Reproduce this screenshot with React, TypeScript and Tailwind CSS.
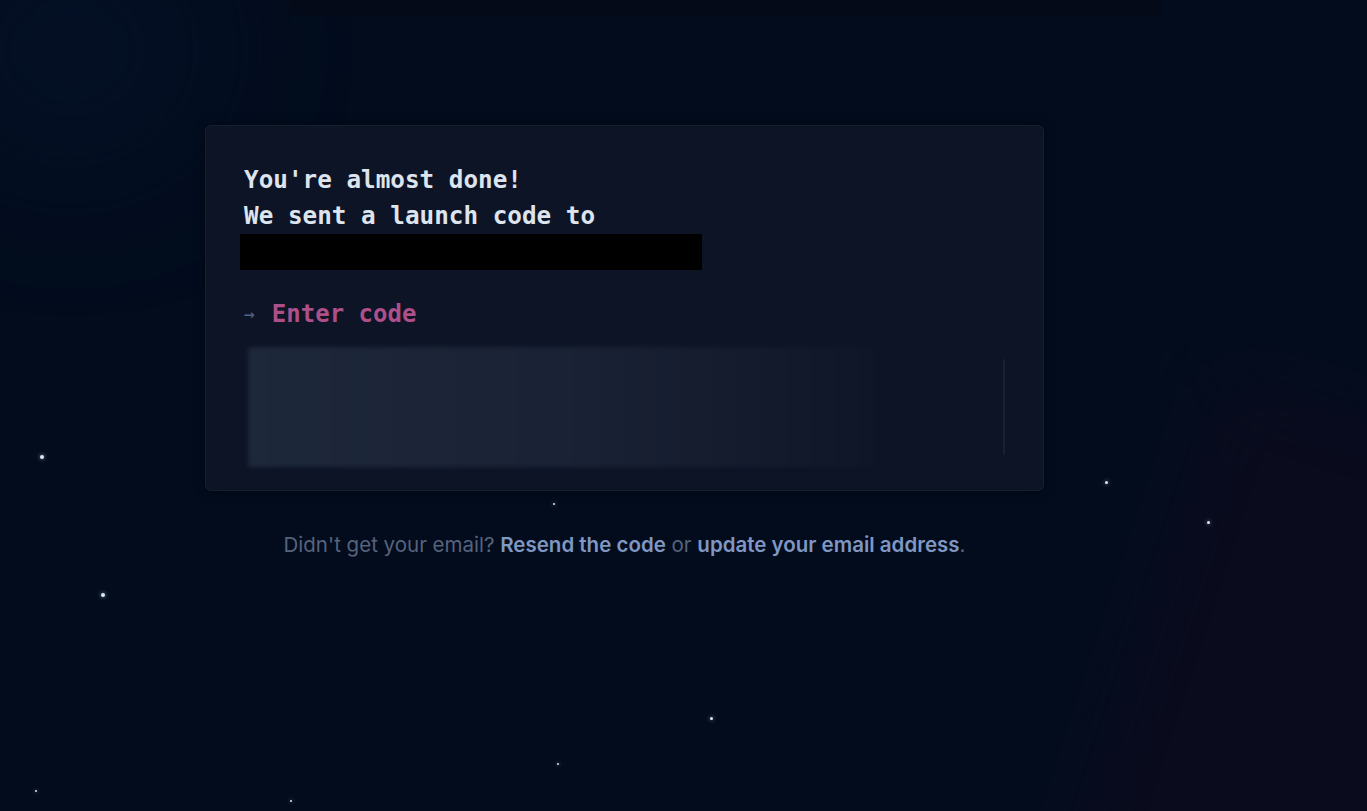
import React from 'react';

const stars = [
  { x: 40, y: 455, s: 4 },
  { x: 101, y: 593, s: 4 },
  { x: 553, y: 503, s: 2 },
  { x: 710, y: 717, s: 3 },
  { x: 1105, y: 481, s: 3 },
  { x: 1207, y: 521, s: 3 },
  { x: 557, y: 763, s: 2 },
  { x: 290, y: 800, s: 2 },
  { x: 35, y: 790, s: 2 },
];

export default function App() {
  return (
    <div className="relative min-h-[811px] w-full overflow-hidden bg-[#020c1d]">
      {/* backdrop haze */}
      <div className="pointer-events-none absolute -right-40 top-[420px] h-[700px] w-[420px] rotate-[18deg] bg-[#0a0b1d] blur-2xl" />
      <div className="pointer-events-none absolute -left-20 -top-20 h-[260px] w-[300px] rounded-full bg-[#06122a] opacity-60 blur-3xl" />
      {stars.map((st, i) => (
        <div
          key={i}
          className="absolute rounded-full bg-[#dfe8f5] shadow-[0_0_4px_rgba(200,220,255,0.7)]"
          style={{ left: st.x, top: st.y, width: st.s, height: st.s }}
        />
      ))}

      <div className="relative">
        <div className="ml-[290px] h-[15px] w-[873px] bg-[#050a18]" />

        <div className="ml-[205px] mt-[110px] w-[839px] rounded-md border border-[#161e30] bg-[#0d1426] px-[38px] pb-[23px] pt-[36px] shadow-[0_0_12px_rgba(0,0,0,0.4)]">
          <div className="font-['DejaVu_Sans_Mono',monospace] text-[24.3px] font-bold leading-[36px] text-[#dde4ee]">
            <div>You're almost done!</div>
            <div>We sent a launch code to</div>
            <div className="-ml-[4px] h-[36px] w-[462px] bg-black" />
          </div>

          <div className="mt-[26px] flex items-center font-['DejaVu_Sans_Mono',monospace] text-[24px] font-bold leading-[36px]">
            <span className="text-[18px] font-normal text-[#4f6388]">→</span>
            <span className="ml-[17px] text-[#ad4f89]">Enter code</span>
          </div>

          <div className="mt-[15px] flex h-[120px] w-[763px] items-center rounded-md">
            <div className="ml-[4px] h-full w-[626px] rounded-sm bg-gradient-to-r from-[#1e283b] via-[#1a2335] to-[#0f1628] blur-[2px]" />
            <div className="ml-auto mr-[2px] h-[96px] w-[2px] rounded-full bg-[#171f31]" />
          </div>
        </div>

        <p className="mt-[42px] w-[1249px] text-center font-['Inter',sans-serif] text-[20.5px] leading-[24px] text-[#56637d]">
          Didn't get your email?{' '}
          <span className="font-semibold text-[#7f97c2]">Resend the code</span> or{' '}
          <span className="font-semibold text-[#7f97c2]">update your email address</span>.
        </p>
      </div>
    </div>
  );
}
